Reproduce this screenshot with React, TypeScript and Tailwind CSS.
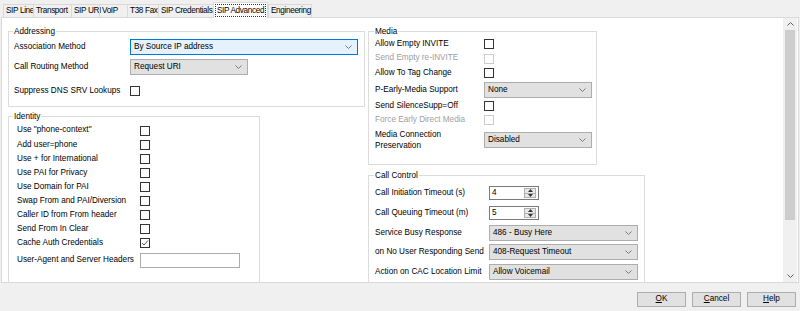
import React from 'react';

const tabs = [
  { label: 'SIP Line', w: 'w-[30px]' },
  { label: 'Transport', w: 'w-[38px]' },
  { label: 'SIP URI', w: 'w-[28px]' },
  { label: 'VoIP', w: 'w-[28px]' },
  { label: 'T38 Fax', w: 'w-[31px]' },
  { label: 'SIP Credentials', w: 'w-[55px]' },
  { label: 'SIP Advanced', w: 'w-[55px]', active: true },
  { label: 'Engineering', w: 'w-[44px]' },
];

function Chevron() {
  return (
    <svg width="7" height="4" viewBox="0 0 7 4" className="shrink-0">
      <path d="M0.5 0.5 L3.5 3.5 L6.5 0.5" fill="none" stroke="#7a7a7a" strokeWidth="1" />
    </svg>
  );
}

function Select({ value, className = '', focused = false }: { value: string; className?: string; focused?: boolean }) {
  return (
    <div
      className={`flex items-center justify-between h-[16px] border pl-[3px] pr-[5px] ${
        focused ? 'bg-[#e5f1fb] border-[#0078d7]' : 'bg-[#e1e1e1] border-[#adadad]'
      } ${className}`}
    >
      <span>{value}</span>
      <Chevron />
    </div>
  );
}

function Check({ checked = false, disabled = false }: { checked?: boolean; disabled?: boolean }) {
  return (
    <div
      className={`w-[10px] h-[10px] border bg-white flex items-center justify-center ${
        disabled ? 'border-[#cccccc]' : 'border-[#333333]'
      }`}
    >
      {checked && (
        <svg width="8" height="8" viewBox="0 0 8 8">
          <path d="M1 4 L3 6 L7 1.5" fill="none" stroke="#555" strokeWidth="1" />
        </svg>
      )}
    </div>
  );
}

function Spin({ value }: { value: string }) {
  return (
    <div className="flex w-[50px] h-[14px] border border-[#7a7a7a] bg-white">
      <span className="flex-1 pl-[2px] leading-[12px]">{value}</span>
      <div className="flex flex-col w-[12px] mr-[2px] my-[1px]">
        <div className="flex-1 flex items-center justify-center bg-[#e8e8e8] border border-[#b0b0b0]">
          <svg width="5" height="3" viewBox="0 0 5 3">
            <path d="M0 3 L2.5 0 L5 3 Z" fill="#333" />
          </svg>
        </div>
        <div className="flex-1 flex items-center justify-center bg-[#e8e8e8] border border-t-0 border-[#b0b0b0]">
          <svg width="5" height="3" viewBox="0 0 5 3">
            <path d="M0 0 L2.5 3 L5 0 Z" fill="#333" />
          </svg>
        </div>
      </div>
    </div>
  );
}

function Group({ title, className, legendClass = '-ml-[1px]', children }: { title: string; className: string; legendClass?: string; children: React.ReactNode }) {
  return (
    <fieldset className={`shrink-0 border border-[#dcdcdc] ${className}`}>
      <legend className={`px-[1px] leading-[11px] ${legendClass}`}>{title}</legend>
      {children}
    </fieldset>
  );
}

const identity: [string, boolean][] = [
  ['Use "phone-context"', false],
  ['Add user=phone', false],
  ['Use + for International', false],
  ['Use PAI for Privacy', false],
  ['Use Domain for PAI', false],
  ['Swap From and PAI/Diversion', false],
  ['Caller ID from From header', false],
  ['Send From In Clear', false],
  ['Cache Auth Credentials', true],
];

export default function App() {
  return (
    <div className="w-[800px] h-[311px] bg-[#f0f0f0] font-['Liberation_Sans',Arial,sans-serif] text-[8.2px] text-black overflow-hidden">
      {/* Tabs */}
      <div className="flex items-end h-[17px] pl-[3px] tracking-[-0.35px]">
        {tabs.map((t) =>
          t.active ? (
            <div
              key={t.label}
              className={`${t.w} relative z-10 h-[16px] -mb-px bg-white border border-b-0 border-[#d9d9d9] flex items-center pl-[1px]`}
            >
              <span className="border border-dotted border-[#333] px-[1px] leading-[11px] whitespace-nowrap">{t.label}</span>
            </div>
          ) : (
            <div
              key={t.label}
              className={`${t.w} h-[13px] border border-b-0 border-r-0 border-[#d9d9d9] last:border-r flex items-center pl-[2px] whitespace-nowrap`}
            >
              {t.label}
            </div>
          )
        )}
      </div>

      {/* Panel */}
      <div className="mx-[1px] h-[266px] bg-white border border-[#d9d9d9] flex">
        <div className="flex-1 overflow-hidden flex pt-[8px] pl-[6px]">
          {/* Left column */}
          <div className="w-[357px] shrink-0 flex flex-col">
            <Group title="Addressing" className="h-[81px] pl-[5px]">
              <div className="flex items-center h-[16px] mt-[2px]">
                <span className="w-[116px]">Association Method</span>
                <Select value="By Source IP address" className="w-[228px]" focused />
              </div>
              <div className="flex items-center h-[16px] mt-[4px]">
                <span className="w-[116px]">Call Routing Method</span>
                <Select value="Request URI" className="w-[118px]" />
              </div>
              <div className="flex items-center h-[12px] mt-[10px]">
                <span className="w-[116px]">Suppress DNS SRV Lookups</span>
                <Check />
              </div>
            </Group>

            <Group title="Identity" className="w-[252px] h-[200px] mt-[4px] pl-[8px]" legendClass="-ml-[4px]">
              <div className="mt-[1px]">
                {identity.map(([label, checked], i) => (
                  <div key={label} className={`flex items-center ${i === 0 ? 'h-[15px]' : 'h-[14px]'}`}>
                    <span className="w-[123px]">{label}</span>
                    <Check checked={checked} />
                  </div>
                ))}
                <div className="flex items-center h-[15px] mt-[3px]">
                  <span className="w-[123px]">User-Agent and Server Headers</span>
                  <div className="w-[100px] h-[15px] border border-[#adadad] bg-white" />
                </div>
              </div>
            </Group>
          </div>

          {/* Right column */}
          <div className="ml-[3px] shrink-0 flex flex-col">
            <Group title="Media" className="w-[229px] h-[139px] pl-[6px]">
              <div className="flex items-center h-[14px]">
                <span className="w-[109px]">Allow Empty INVITE</span>
                <Check />
              </div>
              <div className="flex items-center h-[15px] text-[#a0a0a0]">
                <span className="w-[109px]">Send Empty re-INVITE</span>
                <Check disabled />
              </div>
              <div className="flex items-center h-[14px]">
                <span className="w-[109px]">Allow To Tag Change</span>
                <Check />
              </div>
              <div className="flex items-center h-[16px] mt-[2px]">
                <span className="w-[109px]">P-Early-Media Support</span>
                <Select value="None" className="w-[108px]" />
              </div>
              <div className="flex items-center h-[14px] mt-[1px]">
                <span className="w-[109px]">Send SilenceSupp=Off</span>
                <Check />
              </div>
              <div className="flex items-center h-[14px] text-[#a0a0a0]">
                <span className="w-[109px]">Force Early Direct Media</span>
                <Check disabled />
              </div>
              <div className="flex items-center h-[22px] mt-[2px]">
                <span className="w-[109px] leading-[11px]">
                  Media Connection
                  <br />
                  Preservation
                </span>
                <Select value="Disabled" className="w-[108px]" />
              </div>
            </Group>

            <Group title="Call Control" className="w-[277px] h-[130px] mt-[5px] pl-[6px]">
              <div className="flex items-center h-[14px] mt-[5px]">
                <span className="w-[114px]">Call Initiation Timeout (s)</span>
                <Spin value="4" />
              </div>
              <div className="flex items-center h-[14px] mt-[6px]">
                <span className="w-[114px]">Call Queuing Timeout (m)</span>
                <Spin value="5" />
              </div>
              <div className="flex items-center h-[16px] mt-[5px]">
                <span className="w-[114px]">Service Busy Response</span>
                <Select value="486 - Busy Here" className="w-[149px]" />
              </div>
              <div className="flex items-center h-[16px] mt-[3px]">
                <span className="w-[114px]">on No User Responding Send</span>
                <Select value="408-Request Timeout" className="w-[149px]" />
              </div>
              <div className="flex items-center h-[16px] mt-[4px]">
                <span className="w-[114px]">Action on CAC Location Limit</span>
                <Select value="Allow Voicemail" className="w-[149px]" />
              </div>
            </Group>
          </div>
        </div>

        {/* Scrollbar */}
        <div className="w-[14px] mr-[1px] bg-[#f0f0f0] flex flex-col items-center">
          <div className="h-[12px] flex items-center justify-center">
            <svg width="7" height="4" viewBox="0 0 7 4">
              <path d="M0.5 3.5 L3.5 0.5 L6.5 3.5" fill="none" stroke="#606060" strokeWidth="1" />
            </svg>
          </div>
          <div className="w-[10px] h-[190px] bg-[#cdcdcd]" />
          <div className="flex-1" />
          <div className="h-[12px] flex items-center justify-center">
            <svg width="7" height="4" viewBox="0 0 7 4">
              <path d="M0.5 0.5 L3.5 3.5 L6.5 0.5" fill="none" stroke="#606060" strokeWidth="1" />
            </svg>
          </div>
        </div>
      </div>

      {/* Buttons */}
      <div className="flex justify-end gap-[6px] mt-[9px] pr-[4px]">
        {[
          ['O', 'K'],
          ['C', 'ancel'],
          ['H', 'elp'],
        ].map(([u, rest]) => (
          <div
            key={u + rest}
            className="w-[49px] h-[15px] bg-[#e1e1e1] border border-[#adadad] flex items-center justify-center"
          >
            <span>
              <span className="underline">{u}</span>
              {rest}
            </span>
          </div>
        ))}
      </div>
    </div>
  );
}
